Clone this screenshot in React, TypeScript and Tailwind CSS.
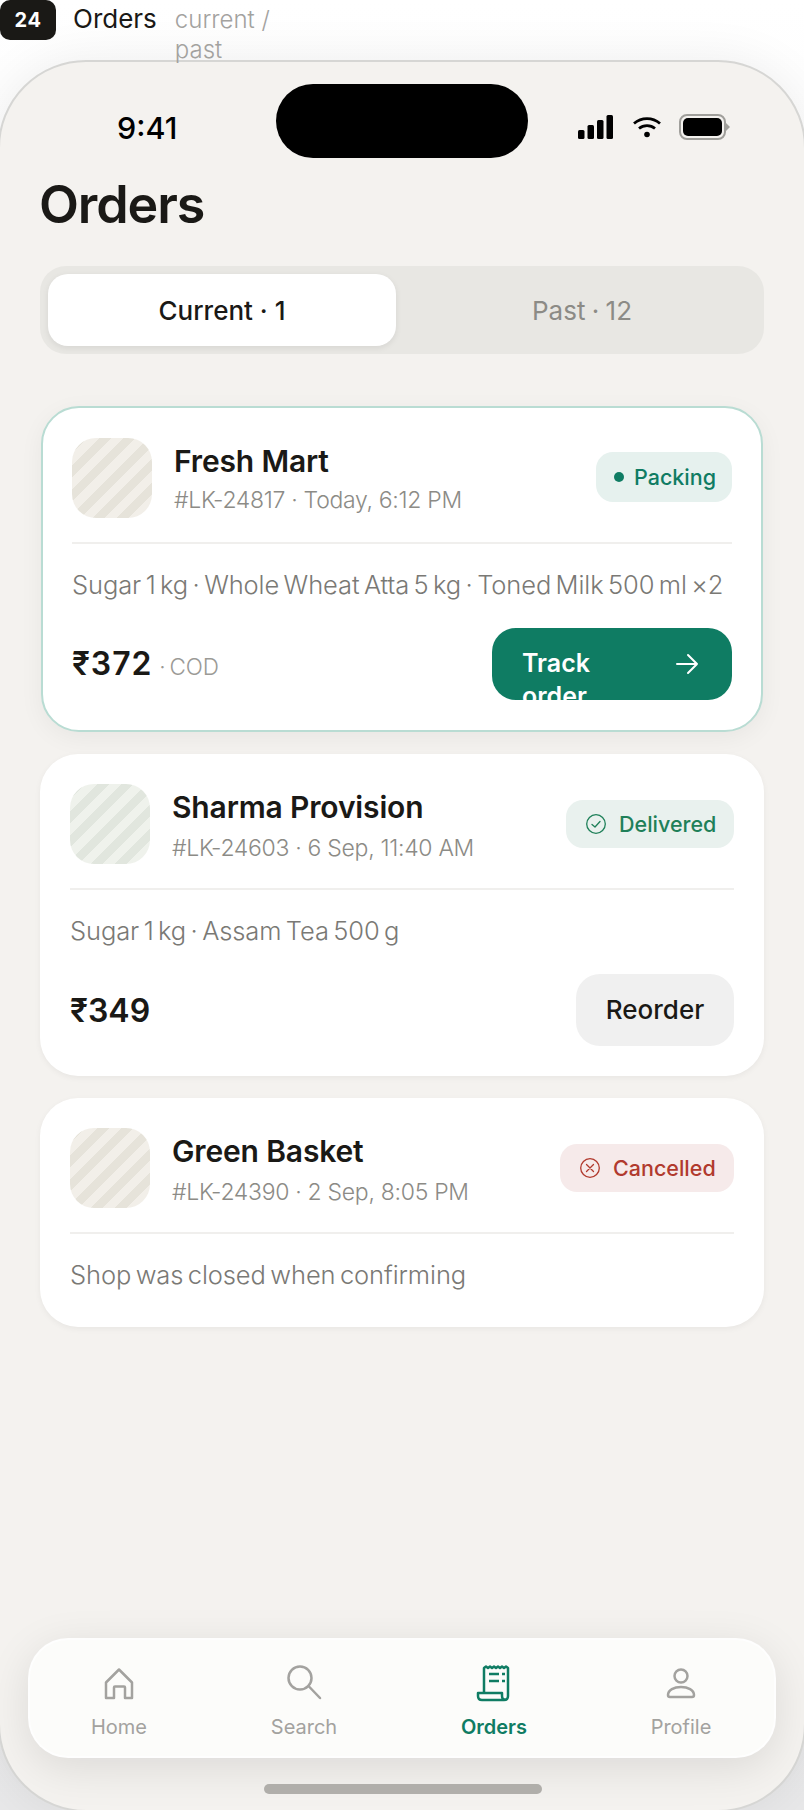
import React from "react";

const inter = "font-['Inter',sans-serif]";

function HomeIcon() {
  return (
    <svg width="40" height="40" viewBox="0 0 40 40" fill="none" stroke="#a3a29f" strokeWidth="2.5" strokeLinejoin="round">
      <path d="M7 35V19.5L20 6.5L33 19.5V35H26V24.5Q26 23.5 25 23.5H16Q15 23.5 15 24.5V35Z" />
    </svg>
  );
}
function SearchIcon() {
  return (
    <svg width="40" height="40" viewBox="0 0 40 40" fill="none" stroke="#a3a29f" strokeWidth="2.5" strokeLinecap="round">
      <circle cx="16" cy="15" r="11.5" />
      <path d="M24.5 23L36 35" />
    </svg>
  );
}
function ReceiptIcon() {
  return (
    <svg width="40" height="40" viewBox="0 0 40 40" fill="none" stroke="#0f7c63" strokeWidth="2.5" strokeLinejoin="round">
      <path d="M10 30V5l2 -1.5 2 1.5 2 -1.5 2 1.5 2 -1.5 2 1.5 2 -1.5 2 1.5 2 -1.5 2 1.5 2 -1.5 2 1.5V33q0 4 -4 4H8q-4 0 -4 -4V30H28v3q0 4 4 4" />
      <path d="M15 11H25M15 18H25" strokeWidth="2.6" />
      <path d="M28 11H31M28 18H31" strokeWidth="2.6" />
    </svg>
  );
}
function ProfileIcon() {
  return (
    <svg width="40" height="40" viewBox="0 0 40 40" fill="none" stroke="#a3a29f" strokeWidth="2.5" strokeLinejoin="round">
      <circle cx="20" cy="13" r="6.5" />
      <path d="M7 32C7 27 13 24 20 24C27 24 33 27 33 32C33 33.5 32 34 31 34H9C8 34 7 33.5 7 32Z" />
    </svg>
  );
}

function StatusIcons() {
  return (
    <div className="flex items-center">
      <svg width="36" height="24" viewBox="0 0 36 24" fill="#000">
        <rect x="0" y="15" width="6.5" height="9" rx="1.5" />
        <rect x="9.5" y="10" width="6.5" height="14" rx="1.5" />
        <rect x="19" y="5" width="6.5" height="19" rx="1.5" />
        <rect x="28.5" y="0" width="6.5" height="24" rx="1.5" />
      </svg>
      <svg className="ml-[19px]" width="28" height="22" viewBox="0 0 28 22" fill="none" stroke="#000" strokeWidth="2.8" strokeLinecap="butt">
        <path d="M1 7.5C8.5 1 19.5 1 27 7.5" />
        <path d="M6 12.5C10.5 8.7 17.5 8.7 22 12.5" />
        <circle cx="14" cy="18.5" r="2.8" fill="#000" stroke="none" />
      </svg>
      <div className="ml-[18px] flex items-center">
        <div className="h-[26px] w-[47px] rounded-[8px] border-2 border-[#a09f9b] p-[2px]">
          <div className="h-full w-full rounded-[5px] bg-black" />
        </div>
        <div className="h-[8px] w-[4px] bg-[#a09f9b] [clip-path:polygon(0_0,100%_50%,0_100%)]" />
      </div>
    </div>
  );
}

function Thumb({ green }: { green?: boolean }) {
  return (
    <div
      className={
        green
          ? "h-[80px] w-[80px] shrink-0 rounded-[24px] bg-[repeating-linear-gradient(135deg,#eff2ec_0_2.75px,#e1e6de_2.75px_11.25px,#eff2ec_11.25px_17px)]"
          : "h-[80px] w-[80px] shrink-0 rounded-[24px] bg-[repeating-linear-gradient(135deg,#f2efe9_0_2.75px,#e6e3da_2.75px_11.25px,#f2efe9_11.25px_17px)]"
      }
    />
  );
}

function Head({ name, meta, badge, low }: { name: string; meta: string; badge: React.ReactNode; low?: boolean }) {
  return (
    <div className="flex items-start justify-between border-b-2 border-[#f0efed] pb-[24px]">
      <div className="flex gap-[22px]">
        <Thumb green={name.startsWith("Sharma")} />
        <div className="pt-[3px]">
          <div className={`${inter} text-[30px] leading-[40px] font-semibold tracking-[-0.15px] text-[#1a1916]`}>{name}</div>
          <div className={`${inter} ${low ? "mt-[5px]" : "mt-[3px]"} text-[23px] leading-[32px] font-light tracking-[-0.3px] text-[#8c8b86]`}>{meta}</div>
        </div>
      </div>
      <div className={low ? "pt-[16px]" : "pt-[14px]"}>{badge}</div>
    </div>
  );
}

function Items({ children }: { children: React.ReactNode }) {
  return (
    <div className={`${inter} mt-[21px] text-[25.5px] leading-[40px] font-light tracking-[-0.1px] [word-spacing:-2.6px] whitespace-nowrap text-[#7a7975]`}>
      {children}
    </div>
  );
}

function Tab({ color, active, label, icon, width }: { color: string; active?: boolean; label: string; icon: React.ReactNode; width: string }) {
  return (
    <div className={`flex ${width} flex-col items-center`}>
      {icon}
      <div className={`${inter} mt-[10px] text-[20px] leading-[28px] ${active ? "font-semibold" : "font-normal"}`} style={{ color }}>
        {label}
      </div>
    </div>
  );
}

export default function App() {
  return (
    <div className="h-[1810px] w-[804px] overflow-hidden bg-gradient-to-b from-white to-[#e8e8e9]">
      <div className="flex h-[60px] items-start">
        <div className={`${inter} flex h-[40px] w-[56px] items-center justify-center rounded-[10px] bg-[#1a1916] text-[20px] font-bold tracking-[0.5px] text-white`}>
          24
        </div>
        <div className={`${inter} ml-[17px] text-[26px] leading-[38px] font-normal text-[#1a1916]`}>Orders</div>
        <div className={`${inter} ml-[18px] w-[110px] pt-[5px] text-[24px] leading-[30px] font-light text-[#a3a29f]`}>current / past</div>
      </div>

      <div className="-ml-[2px] flex h-[1752px] w-[808px] flex-col rounded-[88px] border-2 border-[#d6d6d4] bg-[#f4f2ef] px-[2px] pb-[16px] shadow-[0_0_50px_rgba(0,0,0,0.07)]">
        <div className="flex h-[96px] items-start">
          <div className={`${inter} ml-[115px] w-[64px] pt-[46px] text-[30.5px] leading-[40px] font-medium whitespace-nowrap text-black`}>9:41</div>
          <div className="mt-[22px] ml-[95px] h-[74px] w-[252px] rounded-full bg-black" />
          <div className="ml-[50px] pt-[52px]">
            <StatusIcons />
          </div>
        </div>

        <div className={`${inter} mt-[14px] ml-[37px] text-[52px] leading-[66px] font-semibold tracking-[-1.1px] text-[#1a1916]`}>Orders</div>

        <div className="mx-[38px] mt-[28px] flex h-[88px] items-center rounded-[26px] bg-[#e8e7e3] p-[8px]">
          <div className={`${inter} flex h-[72px] w-[348px] items-center justify-center rounded-[20px] bg-white text-[26px] font-medium text-[#1a1916] shadow-[0_2px_6px_rgba(0,0,0,0.08)]`}>
            Current · 1
          </div>
          <div className={`${inter} flex h-[72px] flex-1 items-center justify-center pl-[12px] text-[26px] font-normal [word-spacing:-1px] text-[#8c8b86]`}>Past · 12</div>
        </div>

        <div className="mx-[38px] mt-[52px] flex flex-1 flex-col">
          <div className="mx-[1px] rounded-[38px] border-2 border-[#b9dcd3] bg-white px-[29px] pt-[30px] shadow-[0_6px_24px_rgba(0,0,0,0.05)]">
            <Head
              name="Fresh Mart"
              meta="#LK-24817 · Today, 6:12 PM"
              badge={
                <div className="flex h-[50px] w-[136px] items-center rounded-[17px] bg-[#e6f1ee] pl-[18px]">
                  <div className="h-[10px] w-[10px] rounded-full bg-[#0f7c63]" />
                  <div className={`${inter} ml-[10px] text-[21.5px] font-medium text-[#0f7c63]`}>Packing</div>
                </div>
              }
            />
            <Items>Sugar 1 kg · Whole Wheat Atta 5 kg · Toned Milk 500 ml ×2</Items>
            <div className="mt-[23px] flex items-center justify-between pb-[30px]">
              <div className="flex items-baseline">
                <span className={`${inter} text-[32px] font-semibold tracking-[0.9px] text-[#1a1916]`}>₹372</span>
                <span className={`${inter} ml-[7px] text-[22.5px] font-light tracking-[-0.2px] [word-spacing:-2px] text-[#9b9a96]`}>· COD</span>
              </div>
              <div className="flex h-[72px] w-[240px] items-center justify-between overflow-hidden rounded-[24px] bg-[#0f7c63] pr-[33px] pl-[30px] text-white">
                <span className={`${inter} mt-[19px] w-[70px] shrink-0 self-start text-[25px] leading-[33px] font-semibold`}>Track order</span>
                <svg width="24" height="24" viewBox="0 0 24 24" fill="none" stroke="#fff" strokeWidth="2" strokeLinecap="round" strokeLinejoin="round">
                  <path d="M2 12H22M13 3L22 12L13 21" />
                </svg>
              </div>
            </div>
          </div>

          <div className="mt-[22px] rounded-[38px] bg-white px-[30px] pt-[30px] shadow-[0_2px_6px_rgba(0,0,0,0.05)]">
            <Head
              low
              name="Sharma Provision"
              meta="#LK-24603 · 6 Sep, 11:40 AM"
              badge={
                <div className="flex h-[48px] w-[168px] items-center rounded-[17px] bg-[#e9f1ee] pl-[20px]">
                  <svg width="20" height="20" viewBox="0 0 20 20" fill="none" stroke="#1f8059" strokeWidth="1.3" strokeLinecap="round" strokeLinejoin="round">
                    <circle cx="10" cy="10" r="9.3" />
                    <path d="M6 10.5L9 13L14 7.5" />
                  </svg>
                  <div className={`${inter} ml-[13px] text-[21.5px] font-medium text-[#1f8059]`}>Delivered</div>
                </div>
              }
            />
            <Items>Sugar 1 kg · Assam Tea 500 g</Items>
            <div className="mt-[23px] flex items-center justify-between pb-[30px]">
              <span className={`${inter} mt-[2px] text-[32px] font-semibold tracking-[0px] text-[#1a1916]`}>₹349</span>
              <div className={`${inter} flex h-[72px] w-[158px] items-center justify-center rounded-[24px] bg-[#f0f0f0] pb-[2px] text-[26px] font-medium text-[#1a1916]`}>
                Reorder
              </div>
            </div>
          </div>

          <div className="mt-[22px] rounded-[38px] bg-white px-[30px] pt-[30px] pb-[32px] shadow-[0_2px_6px_rgba(0,0,0,0.05)]">
            <Head
              low
              name="Green Basket"
              meta="#LK-24390 · 2 Sep, 8:05 PM"
              badge={
                <div className="flex h-[48px] w-[174px] items-center rounded-[17px] bg-[#f6eaea] pl-[20px]">
                  <svg width="20" height="20" viewBox="0 0 20 20" fill="none" stroke="#b13a2e" strokeWidth="1.3" strokeLinecap="round">
                    <circle cx="10" cy="10" r="9.3" />
                    <path d="M6.5 6.5L13.5 13.5M13.5 6.5L6.5 13.5" />
                  </svg>
                  <div className={`${inter} ml-[13px] text-[21.5px] font-medium text-[#b13a2e]`}>Cancelled</div>
                </div>
              }
            />
            <Items>Shop was closed when confirming</Items>
          </div>
        </div>

        <div className="mx-[26px] flex h-[120px] items-start rounded-[40px] border-2 border-white/70 bg-[#fcfcfa] pt-[23px] shadow-[0_10px_44px_rgba(0,0,0,0.1)]">
          <Tab width="w-[178px]" color="#a3a29f" label="Home" icon={<HomeIcon />} />
          <Tab width="w-[192px]" color="#a3a29f" label="Search" icon={<SearchIcon />} />
          <Tab width="w-[188px]" color="#0f7c63" active label="Orders" icon={<ReceiptIcon />} />
          <Tab width="w-[186px]" color="#a3a29f" label="Profile" icon={<ProfileIcon />} />
        </div>
        <div className="mt-[26px] ml-[262px] h-[10px] w-[278px] rounded-full bg-[#b0aeaa]" />
      </div>
    </div>
  );
}
